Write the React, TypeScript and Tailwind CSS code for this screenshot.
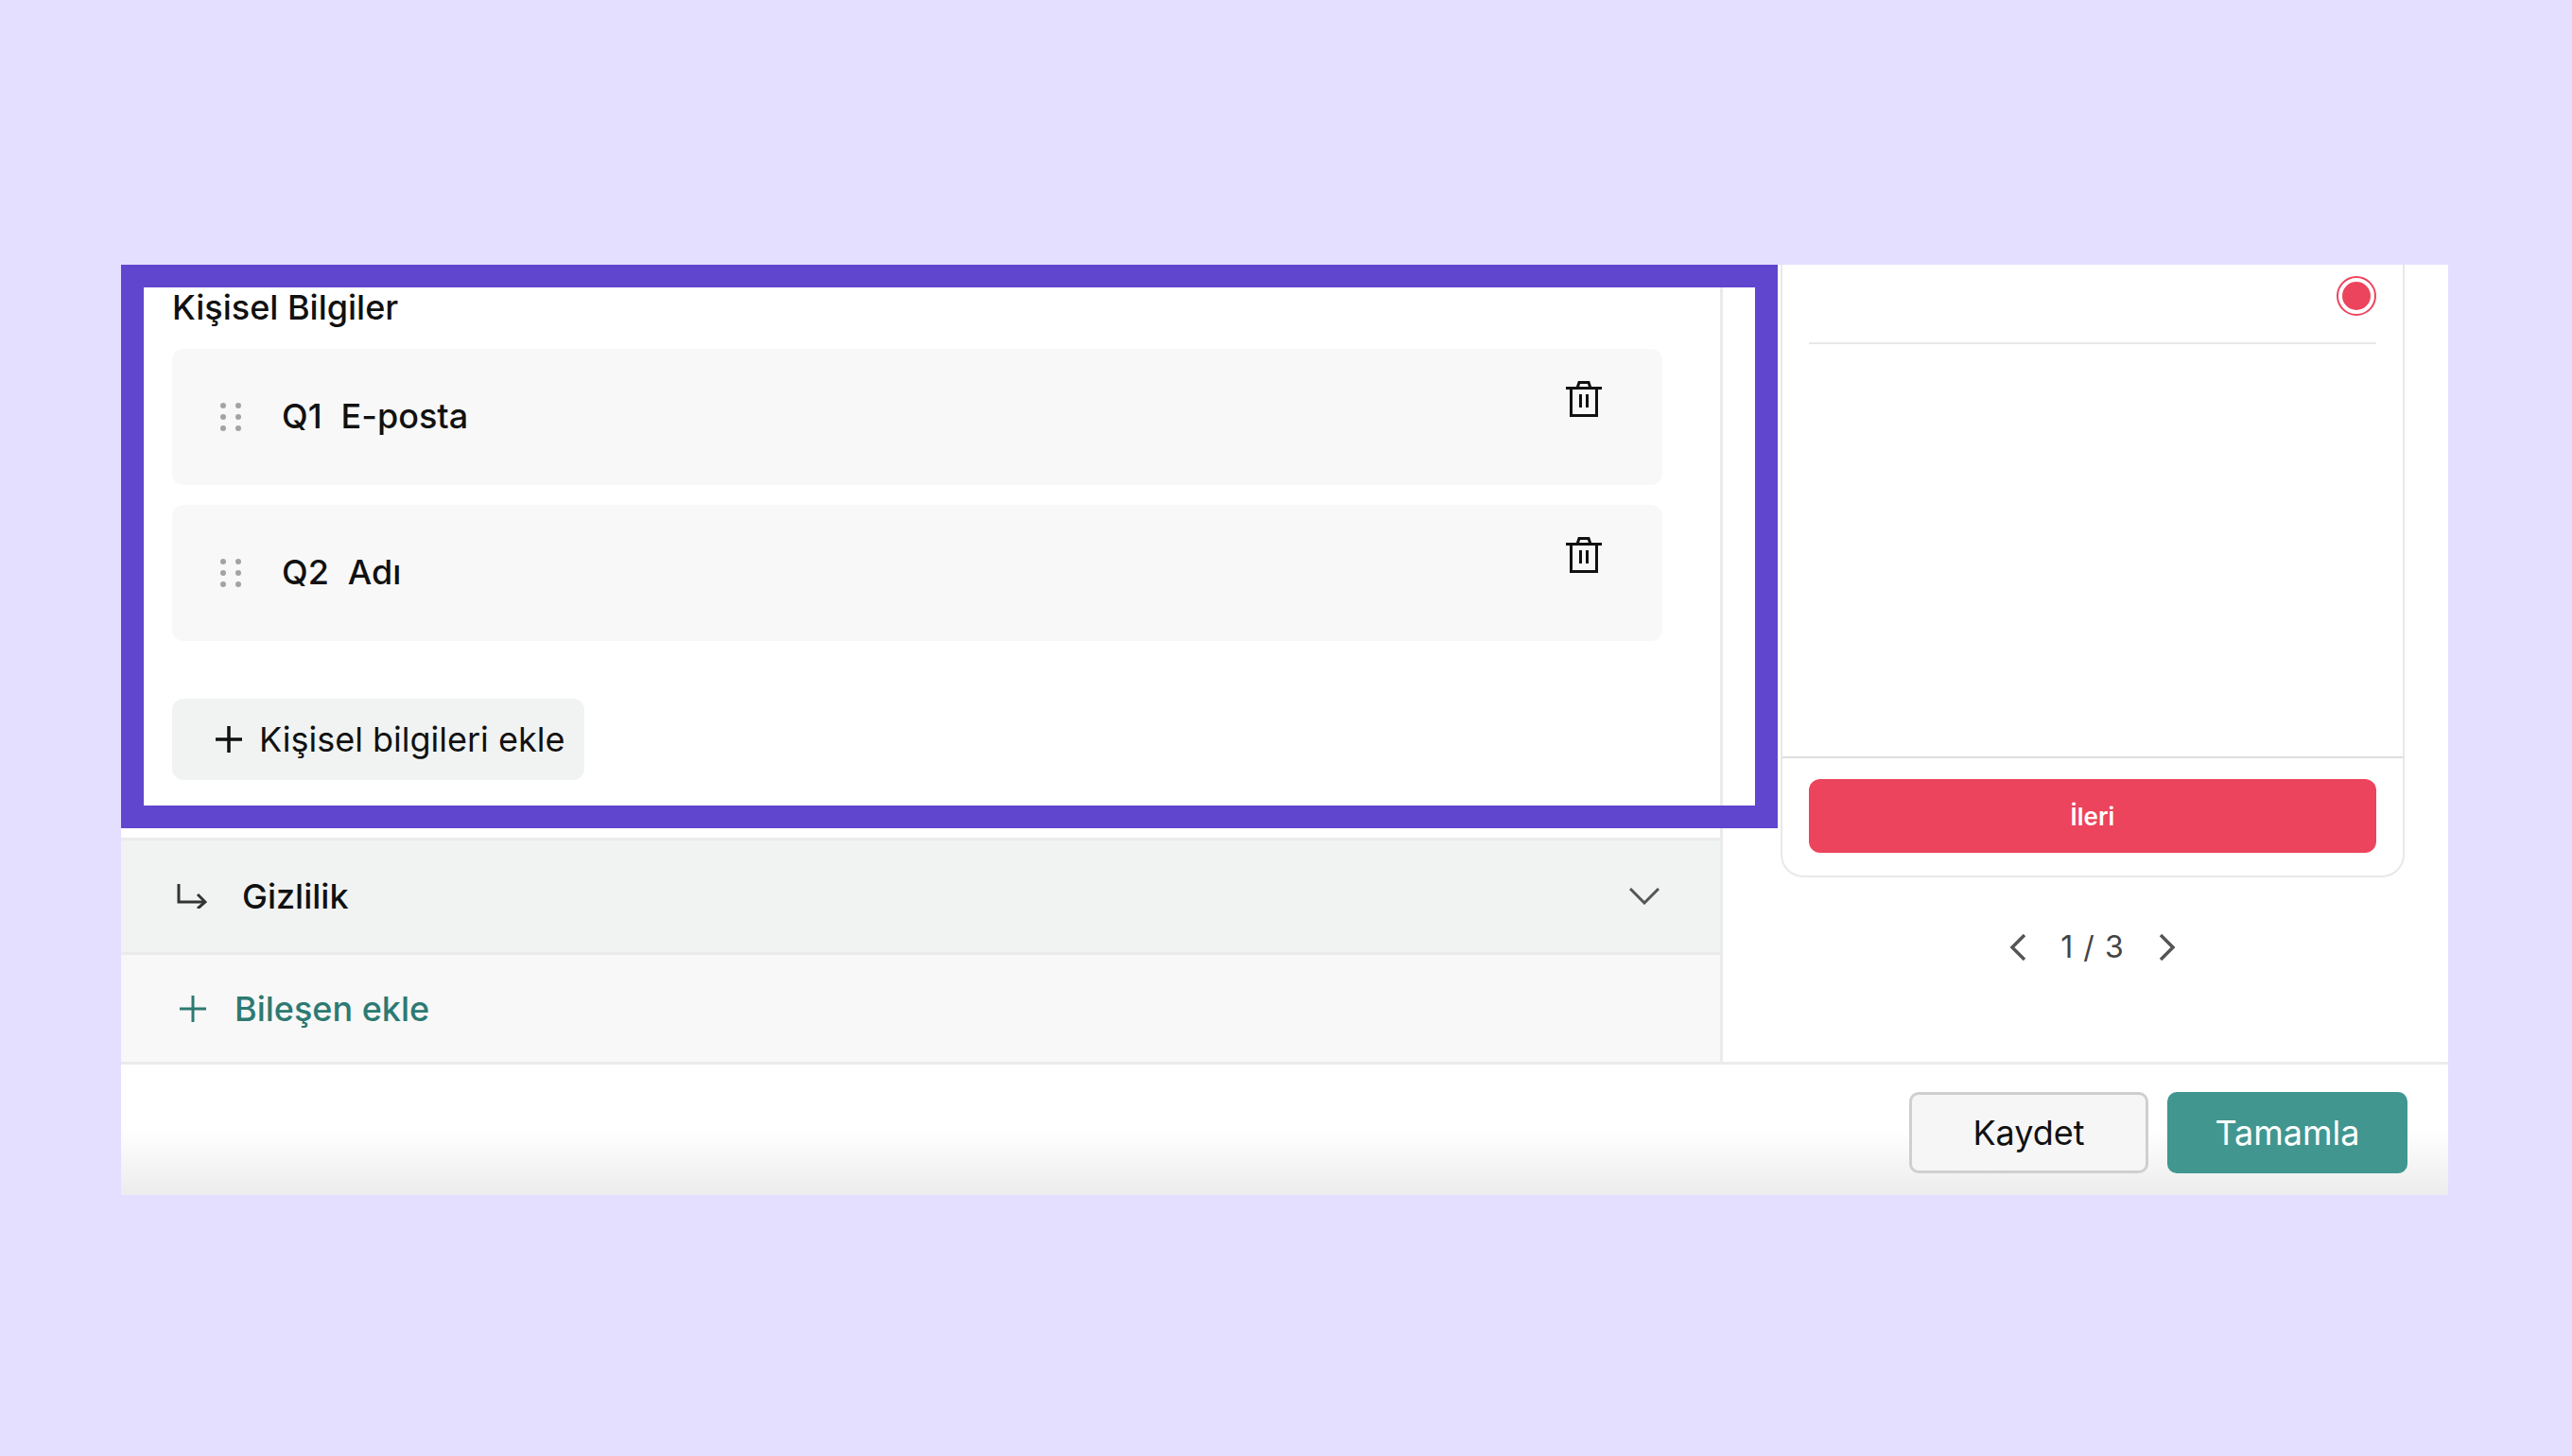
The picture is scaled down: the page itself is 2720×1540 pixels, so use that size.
function TrashIcon() {
    return (
        <svg width="38" height="38" viewBox="0 0 38 38" fill="none" stroke="#111" strokeWidth="3" className="block">
            <path d="M0 7.5H38" />
            <path d="M5.5 7.5V36.5H32.5V7.5" />
            <path d="M12 7.5L14 1.5H24L26 7.5" />
            <path d="M15.5 14V28M22.5 14V28" />
        </svg>
    );
}

function DragDots() {
    return (
        <svg width="24" height="30" viewBox="0 0 24 30" fill="#a3a3a3" className="block">
            <circle cx="3" cy="3" r="3" />
            <circle cx="19" cy="3" r="3" />
            <circle cx="3" cy="15" r="3" />
            <circle cx="19" cy="15" r="3" />
            <circle cx="3" cy="27" r="3" />
            <circle cx="19" cy="27" r="3" />
        </svg>
    );
}

function PlusIcon({ color, size, width }: { color: string; size: number; width: number }) {
    return (
        <svg width={size} height={size} viewBox="0 0 28 28" fill="none" stroke={color} strokeWidth={width} className="block">
            <path d="M14 0V28M0 14H28" />
        </svg>
    );
}

function Question({ code, label, gap }: { code: string; label: string; gap: string }) {
    return (
        <div className="flex h-[144px] w-[1576px] rounded-xl bg-[#f8f8f8]">
            <div className="ml-[51px] mt-[57px]">
                <DragDots />
            </div>
            <div className={`ml-[41px] mt-[51px] flex h-[40px] items-center ${gap} text-[36px] font-medium text-[#111]`}>
                <span>{code}</span>
                <span>{label}</span>
            </div>
            <div className="ml-auto mr-[64px] mt-[34px]">
                <TrashIcon />
            </div>
        </div>
    );
}

function App() {
    return (
        <div className="min-h-[1540px] bg-[#e4dfff] pl-[128px] pt-[280px] font-['Inter',sans-serif]">
            <div className="relative flex h-[984px] w-[2461px] flex-col overflow-hidden bg-white">
                <div className="flex h-[846px] border-b-[3px] border-[#ebebeb]">
                    <div className="flex w-[1694px] flex-col border-r-[3px] border-[#ebebeb]">
                        <div className="flex h-[606px] flex-col pl-[54px]">
                            <h2 className="mt-[25px] h-[40px] text-[36px] font-medium leading-[40px] text-[#111]">Kişisel Bilgiler</h2>
                            <div className="mt-[24px] flex flex-col gap-[21px]">
                                <Question code="Q1" label="E-posta" gap="gap-[20px]" />
                                <Question code="Q2" label="Adı" gap="gap-[20px]" />
                            </div>
                            <button type="button" className="mt-[61px] flex h-[86px] w-[436px] items-center rounded-xl bg-[#f1f3f3] pl-[46px] text-[36px] text-[#111]">
                                <PlusIcon color="#111" size={28} width={3.5} />
                                <span className="ml-[18px]">Kişisel bilgileri ekle</span>
                            </button>
                        </div>
                        <div className="flex h-[124px] items-center border-y-[3px] border-[#ebebeb] bg-[#f1f3f3] pl-[59px] pr-[64px]">
                            <svg width="32" height="26" viewBox="0 0 32 26" fill="none" stroke="#333" strokeWidth="3" className="block">
                                <path d="M2 0V19H30" />
                                <path d="M22 11L30 19L22 26" />
                            </svg>
                            <span className="ml-[37px] text-[36px] font-medium text-[#111]">Gizlilik</span>
                            <svg width="32" height="18" viewBox="0 0 32 18" fill="none" stroke="#555" strokeWidth="3" className="ml-auto block">
                                <path d="M1 1L16 16L31 1" />
                            </svg>
                        </div>
                        <div className="flex flex-1 items-center bg-[#f8f8f8] pl-[62px]">
                            <PlusIcon color="#2d7a72" size={28} width={3} />
                            <span className="ml-[30px] text-[36px] font-medium text-[#2d7a72]">Bileşen ekle</span>
                        </div>
                    </div>
                    <div className="flex flex-1 flex-col pl-[61px]">
                        <div className="flex h-[648px] w-[660px] flex-col rounded-b-3xl border-x-2 border-b-2 border-[#e8e8e8]">
                            <div className="mx-[28px] flex h-[84px] justify-end border-b-2 border-[#e8e8e8] pt-[12px]">
                                <div className="flex size-[42px] items-center justify-center rounded-full border-2 border-[#ec445c]">
                                    <div className="size-[30px] rounded-full bg-[#ec445c]" />
                                </div>
                            </div>
                            <div className="flex-1" />
                            <div className="h-[126px] border-t-2 border-[#dedede] px-[28px] pt-[22px]">
                                <button type="button" className="flex h-[78px] w-full items-center justify-center rounded-xl bg-[#ec445c] text-[26px] font-semibold text-white">
                                    İleri
                                </button>
                            </div>
                        </div>
                        <div className="mt-[50px] flex w-[660px] items-center justify-center">
                            <svg width="18" height="28" viewBox="0 0 18 28" fill="none" stroke="#555" strokeWidth="3.5" className="block">
                                <path d="M16 1L3 14L16 27" />
                            </svg>
                            <span className="mx-[36px] text-[32px] tracking-[1px] text-[#444]">1 / 3</span>
                            <svg width="18" height="28" viewBox="0 0 18 28" fill="none" stroke="#555" strokeWidth="3.5" className="block">
                                <path d="M2 1L15 14L2 27" />
                            </svg>
                        </div>
                    </div>
                </div>
                <div className="flex flex-1 items-start justify-end gap-[20px] bg-[linear-gradient(to_bottom,#ffffff_50%,#ececec_100%)] pr-[43px] pt-[29px]">
                    <button type="button" className="h-[86px] w-[253px] rounded-[10px] border-[3px] border-[#cfcfcf] bg-[#f6f6f6] text-[36px] text-[#111]">
                        Kaydet
                    </button>
                    <button type="button" className="h-[86px] w-[254px] rounded-[10px] bg-[#419690] text-[36px] text-white">
                        Tamamla
                    </button>
                </div>
                <div className="pointer-events-none absolute left-0 top-0 h-[596px] w-[1752px] border-[24px] border-[#6045cf]" />
            </div>
        </div>
    );
}

export default App;
